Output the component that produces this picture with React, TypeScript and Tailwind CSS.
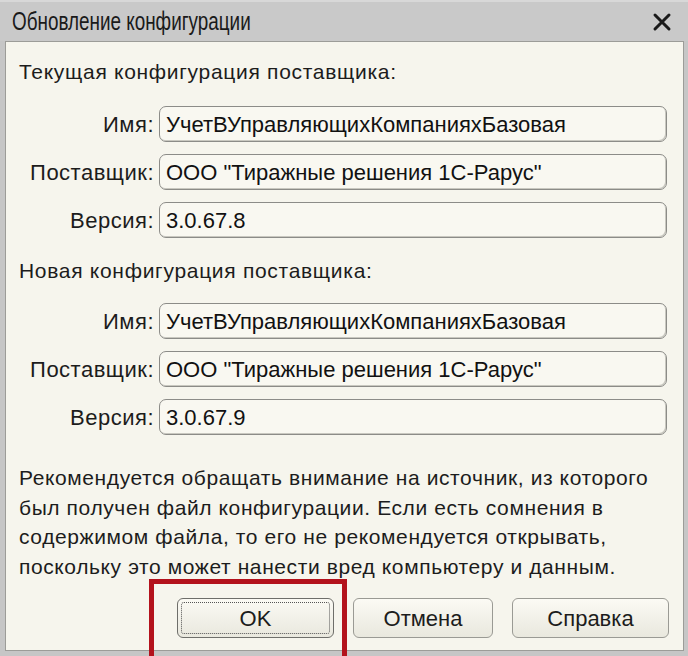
import React from "react";

const font = { fontFamily: '"Liberation Sans", Arial, sans-serif' };

function Row({ label, value }: { label: string; value: string }) {
  return (
    <div className="flex items-center h-[36px]">
      <div className="w-[150px] pr-[2px] text-right text-[22px] text-[#1c1c1c] tracking-[0.5px] whitespace-nowrap">{label}</div>
      <div className="ml-[3px] w-[508px] h-[36px] rounded-[7px] border border-[#8c8c88] bg-[#f9f8f1] shadow-[inset_-1px_-1px_0_#c9c8c0] flex items-center pl-[6px] text-[22px] text-[#111] whitespace-nowrap">
        {value}
      </div>
    </div>
  );
}

function Button({ children, focused, w }: { children: React.ReactNode; focused?: boolean; w: string }) {
  return (
    <div
      className={`${w} h-[40px] rounded-[6px] border ${focused ? "border-[#6e6e6a]" : "border-[#9a9a94]"} bg-gradient-to-b from-[#fbfaf4] to-[#e9e8de] flex items-center justify-center text-[22px] text-[#1c1c1c] p-[3px]`}
    >
      {focused ? (
        <div className="w-full h-full border border-dotted border-[#555] rounded-[3px] flex items-center justify-center">{children}</div>
      ) : (
        children
      )}
    </div>
  );
}

export default function App() {
  return (
    <div className="relative w-[688px] h-[656px] bg-[#c6c6c6] overflow-hidden flex flex-col" style={font}>
      <div className="h-[41px] shrink-0 flex items-center justify-between pl-[12px] pr-[16px] bg-[#c9c9c9] border-t-[2px] border-[#d8d8d8]">
        <div className="text-[25px] text-[#1a1a1a] scale-x-[0.755] origin-left whitespace-nowrap">Обновление конфигурации</div>
        <svg width="20" height="20" viewBox="0 0 20 20" className="mt-[1px]">
          <path d="M3 3 L17 17 M17 3 L3 17" stroke="#1a1a1a" strokeWidth="3" strokeLinecap="round" />
        </svg>
      </div>
      <div className="ml-[5px] mr-[4px] h-[610px] border border-[#9c9c98] bg-[#f6f5ed] flex flex-col pl-[13px]">
        <div className="mt-[17px] text-[21px] text-[#1c1c1c] tracking-[0.7px] leading-[26px] whitespace-nowrap">Текущая конфигурация поставщика:</div>
        <div className="mt-[21px] flex flex-col gap-[12px] -ml-[13px]">
          <Row label="Имя:" value="УчетВУправляющихКомпанияхБазовая" />
          <Row label="Поставщик:" value={'ООО "Тиражные решения 1С-Рарус"'} />
          <Row label="Версия:" value="3.0.67.8" />
        </div>
        <div className="mt-[20px] text-[21px] text-[#1c1c1c] tracking-[0.7px] leading-[26px] whitespace-nowrap">Новая конфигурация поставщика:</div>
        <div className="mt-[19px] flex flex-col gap-[12px] -ml-[13px]">
          <Row label="Имя:" value="УчетВУправляющихКомпанияхБазовая" />
          <Row label="Поставщик:" value={'ООО "Тиражные решения 1С-Рарус"'} />
          <Row label="Версия:" value="3.0.67.9" />
        </div>
        <div className="mt-[28px] text-[21px] leading-[29.5px] text-[#1c1c1c] tracking-[0.6px] whitespace-nowrap">
          Рекомендуется обращать внимание на источник, из которого
          <br />
          был получен файл конфигурации. Если есть сомнения в
          <br />
          содержимом файла, то его не рекомендуется открывать,
          <br />
          поскольку это может нанести вред компьютеру и данным.
        </div>
        <div className="mt-[17px] flex gap-[19px] pl-[158px]">
          <Button focused w="w-[157px]">OK</Button>
          <Button w="w-[140px]">Отмена</Button>
          <Button w="w-[157px]">Справка</Button>
        </div>
      </div>
      <div className="absolute left-[149px] top-[579px] w-[198px] h-[90px] border-[5px] border-[#b3121c]" />
    </div>
  );
}
